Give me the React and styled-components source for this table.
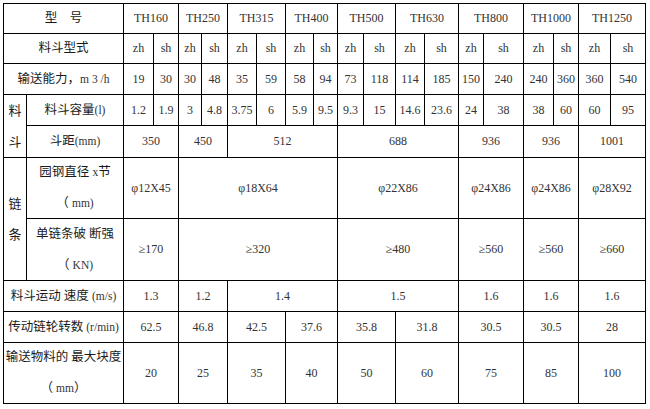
import React from 'react';
import styled, { createGlobalStyle } from 'styled-components';

const GlobalStyle = createGlobalStyle`
  html, body {
    margin: 0;
    padding: 0;
    background: #fff;
  }
  body {
    padding: 3px;
  }
`;

// widths of the grid tracks, the 1px black lines sit in between
const colWidths = [22, 96, 29, 24, 22, 25, 28, 28, 27, 23, 25, 31, 28, 33, 24, 39, 29, 24, 31, 34];
const rowHeights = [29, 29, 30, 30, 31, 60, 61, 30, 30, 60];

const Sheet = styled.div`
  display: inline-grid;
  grid-template-columns: ${colWidths.map((w) => `${w}px`).join(' ')};
  grid-template-rows: ${rowHeights.map((h) => `${h}px`).join(' ')};
  gap: 1px;
  padding: 1px;
  background: #000;
  font-family: "Liberation Serif", "Noto Sans CJK SC", serif;
  color: #333;
`;

const Cell = styled.div`
  grid-column: ${(p) => p.$col} / span ${(p) => p.$span || 1};
  grid-row: ${(p) => p.$row} / span ${(p) => p.$rows || 1};
  background: #fff;
  display: flex;
  align-items: center;
  justify-content: center;
  font-size: 12px;
  white-space: nowrap;
`;

const Label = styled(Cell)`
  flex-direction: column;
  font-size: 12.5px;
  line-height: 31px;
  color: #1a1a1a;
`;

const Group = styled(Label)`
  font-size: 13px;
`;

const Latin = styled.span`
  font-size: 11.5px;
  color: #333;
`;

const TYPES = ['TH160', 'TH250', 'TH315', 'TH400', 'TH500', 'TH630', 'TH800', 'TH1000', 'TH1250'];

const rows = [
  { label: ['型　号'], cells: TYPES.map((t) => [t, 2]) },
  { label: ['料斗型式'], cells: TYPES.flatMap(() => [['zh', 1], ['sh', 1]]) },
  {
    label: [<>输送能力，<Latin>m 3 /h</Latin></>],
    cells: ['19', '30', '30', '48', '35', '59', '58', '94', '73', '118', '114', '185', '150', '240', '240', '360', '360', '540'].map((v) => [v, 1]),
  },
  {
    group: ['料', '斗'],
    label: [<>料斗容量<Latin>(l)</Latin></>],
    cells: ['1.2', '1.9', '3', '4.8', '3.75', '6', '5.9', '9.5', '9.3', '15', '14.6', '23.6', '24', '38', '38', '60', '60', '95'].map((v) => [v, 1]),
  },
  {
    label: [<>斗距<Latin>(mm)</Latin></>],
    cells: [['350', 2], ['450', 2], ['512', 4], ['688', 4], ['936', 2], ['936', 2], ['1001', 2]],
  },
  {
    group: ['链', '条'],
    label: [<>园钢直径 <Latin>x</Latin>节</>, <>（ <Latin>mm)</Latin></>],
    cells: [['φ12X45', 2], ['φ18X64', 6], ['φ22X86', 4], ['φ24X86', 2], ['φ24X86', 2], ['φ28X92', 2]],
  },
  {
    label: ['单链条破 断强', <>（ <Latin>KN)</Latin></>],
    cells: [['≥170', 2], ['≥320', 6], ['≥480', 4], ['≥560', 2], ['≥560', 2], ['≥660', 2]],
  },
  {
    label: [<>料斗运动 速度 <Latin>(m/s)</Latin></>],
    cells: [['1.3', 2], ['1.2', 2], ['1.4', 4], ['1.5', 4], ['1.6', 2], ['1.6', 2], ['1.6', 2]],
  },
  {
    label: [<>传动链轮转数 <Latin>(r/min)</Latin></>],
    cells: ['62.5', '46.8', '42.5', '37.6', '35.8', '31.8', '30.5', '30.5', '28'].map((v) => [v, 2]),
  },
  {
    label: ['输送物料的 最大块度', <>（ <Latin>mm</Latin>）</>],
    cells: ['20', '25', '35', '40', '50', '60', '75', '85', '100'].map((v) => [v, 2]),
  },
];

const App = () => {
  const items = [];
  let inGroup = false;

  rows.forEach((row, r) => {
    const rowNo = r + 1;

    if (row.group) {
      items.push(
        <Group key={`g${r}`} $col={1} $row={rowNo} $rows={2}>
          {row.group.map((ch) => (
            <div key={ch}>{ch}</div>
          ))}
        </Group>
      );
      inGroup = true;
    }

    const grouped = inGroup;
    items.push(
      <Label key={`l${r}`} $col={grouped ? 2 : 1} $span={grouped ? 1 : 2} $row={rowNo}>
        {row.label.map((line, i) => (
          <div key={i}>{line}</div>
        ))}
      </Label>
    );

    // second row of a group ends it
    if (!row.group) inGroup = false;

    let col = 3;
    row.cells.forEach(([text, span], i) => {
      items.push(
        <Cell key={`c${r}-${i}`} $col={col} $span={span} $row={rowNo}>
          {text}
        </Cell>
      );
      col += span;
    });
  });

  return (
    <>
      <GlobalStyle />
      <Sheet>{items}</Sheet>
    </>
  );
};

export default App;
